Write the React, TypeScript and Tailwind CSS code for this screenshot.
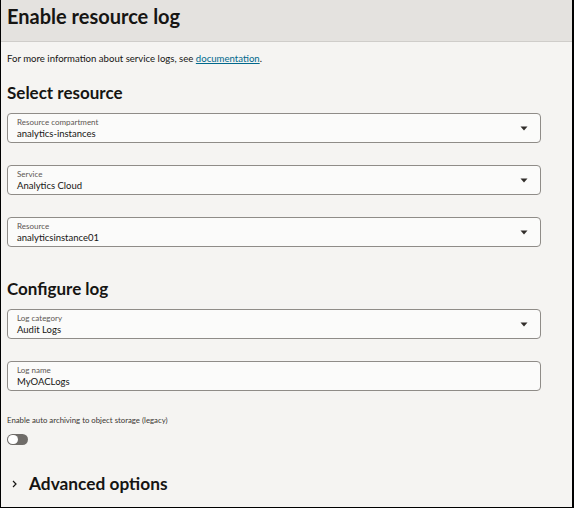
import React from "react";

const Caret = () => (
  <svg width="8" height="5" viewBox="0 0 8 5" className="shrink-0">
    <path d="M0.5 0.5 L7.5 0.5 L4 4.5 Z" fill="#312d2a" />
  </svg>
);

function Field({ label, value, select = true }: { label: string; value: string; select?: boolean }) {
  return (
    <div className="flex h-[30px] w-[534px] items-center rounded-[4px] border border-[#8f8c88] bg-[#fbfbfa] pl-[9px] pr-[12px]">
      <div className="flex flex-1 flex-col">
        <span className="text-[8px] leading-[10px] text-[#5b5652]">{label}</span>
        <span className="text-[9.5px] leading-[13px] text-[#161513]">{value}</span>
      </div>
      {select && <Caret />}
    </div>
  );
}

export default function App() {
  return (
    <div
      className="flex h-[508px] w-[574px] flex-col overflow-hidden border-b border-l border-r-2 border-black bg-[#f5f4f2] text-[#161513]"
      style={{ fontFamily: 'Lato, "Noto Sans", sans-serif' }}
    >
      <div className="flex h-[42px] shrink-0 items-start border-b border-[#cfcdca] bg-[#e4e2df] pl-[6px] pt-[1px]">
        <h1 className="text-[20px] font-bold leading-[30px]">Enable resource log</h1>
      </div>
      <div className="flex flex-col pl-[6px]">
        <p className="mt-[11px] text-[9.6px] leading-[12px]">
          For more information about service logs, see{" "}
          <span className="text-[#00688c] underline">documentation</span>.
        </p>
        <h2 className="mt-[17px] text-[17px] font-bold leading-[22px]">Select resource</h2>
        <div className="mt-[9px] flex flex-col gap-[22px]">
          <Field label="Resource compartment" value="analytics-instances" />
          <Field label="Service" value="Analytics Cloud" />
          <Field label="Resource" value="analyticsinstance01" />
        </div>
        <h2 className="mt-[31px] text-[17px] font-bold leading-[22px]">Configure log</h2>
        <div className="mt-[9px] flex flex-col gap-[22px]">
          <Field label="Log category" value="Audit Logs" />
          <Field label="Log name" value="MyOACLogs" select={false} />
        </div>
        <p className="mt-[24px] text-[7.8px] leading-[11px] text-[#3a3632]">
          Enable auto archiving to object storage (legacy)
        </p>
        <div className="mt-[8px] flex h-[11px] w-[21px] items-center rounded-full bg-[#6f6c69] pl-[1px]">
          <div className="h-[9px] w-[10px] rounded-full bg-white" />
        </div>
        <div className="mt-[28px] flex items-center">
          <svg width="5" height="8" viewBox="0 0 5 8" className="ml-[5px]">
            <path d="M1 1 L4 4 L1 7" fill="none" stroke="#161513" strokeWidth="1.2" />
          </svg>
          <span className="ml-[12px] text-[17.3px] font-bold leading-[22px]">Advanced options</span>
        </div>
      </div>
    </div>
  );
}
